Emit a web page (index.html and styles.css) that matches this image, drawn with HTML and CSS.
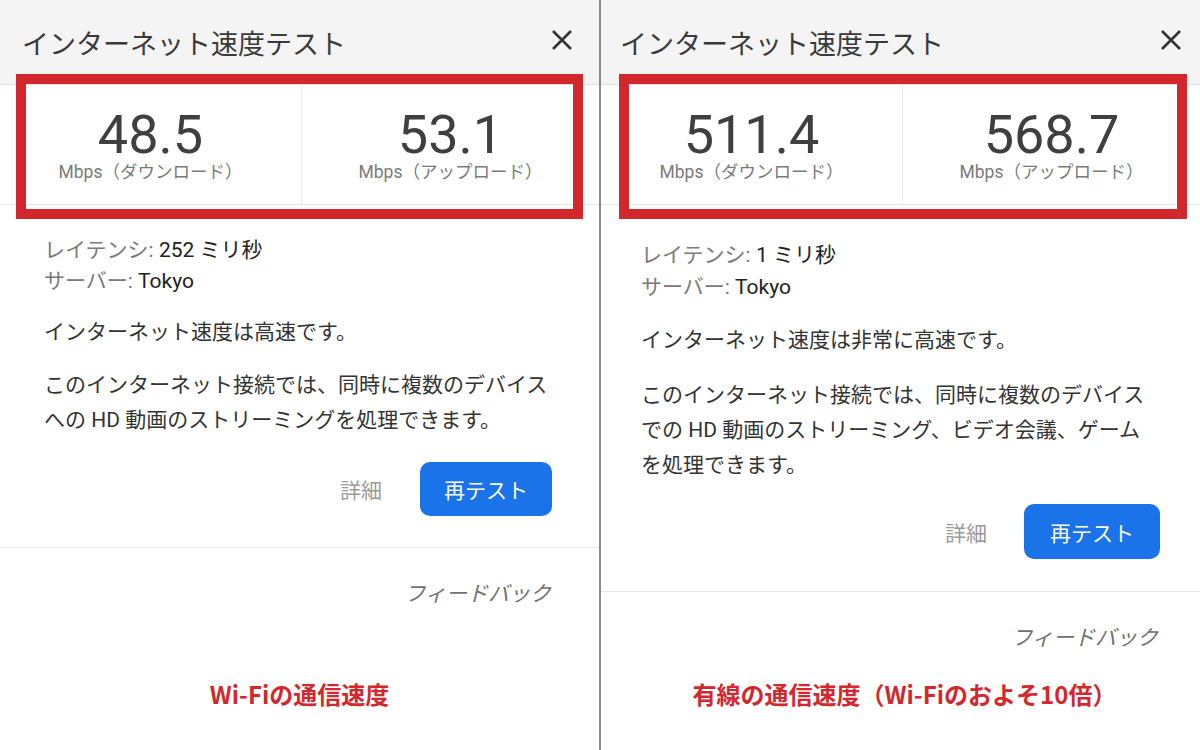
FILE: index.html
```html
<!DOCTYPE html>
<html lang="ja">
<head>
    <meta charset="UTF-8">
    <meta name="viewport" content="width=device-width, initial-scale=1.0">
    <title>インターネット速度テスト - Wi-Fiと有線の比較</title>
    <link rel="stylesheet" href="styles.css">
</head>
<body>

<div class="compare">
    <!-- Wi-Fi -->
    <div class="shot">
        <div class="dialog">
            <div class="dialog-header">
                <h1>インターネット速度テスト</h1>
                <span class="close">
                    <svg width="24" height="24" viewBox="0 0 24 24"><path d="M3 3 L21 21 M21 3 L3 21" stroke="#333" stroke-width="2.6" fill="none"/></svg>
                </span>
            </div>
            <div class="stats">
                <div class="stat">
                    <div class="stat-value">48.5</div>
                    <div class="stat-unit">Mbps（ダウンロード）</div>
                </div>
                <div class="stat">
                    <div class="stat-value">53.1</div>
                    <div class="stat-unit">Mbps（アップロード）</div>
                </div>
            </div>
            <div class="highlight"></div>
            <div class="dialog-body">
                <div class="meta"><span class="meta-label">レイテンシ:</span> 252 ミリ秒</div>
                <div class="meta"><span class="meta-label">サーバー:</span> Tokyo</div>
                <p class="summary">インターネット速度は高速です。</p>
                <p class="detail">このインターネット接続では、同時に複数のデバイスへの HD 動画のストリーミングを処理できます。</p>
            </div>
            <div class="actions">
                <button class="link-btn">詳細</button>
                <button class="primary-btn">再テスト</button>
            </div>
            <div class="feedback">フィードバック</div>
        </div>
        <p class="caption">Wi-Fiの通信速度</p>
    </div>

    <!-- 有線 -->
    <div class="shot">
        <div class="dialog dialog-wired">
            <div class="dialog-header">
                <h1>インターネット速度テスト</h1>
                <span class="close">
                    <svg width="24" height="24" viewBox="0 0 24 24"><path d="M3 3 L21 21 M21 3 L3 21" stroke="#333" stroke-width="2.6" fill="none"/></svg>
                </span>
            </div>
            <div class="stats">
                <div class="stat">
                    <div class="stat-value">511.4</div>
                    <div class="stat-unit">Mbps（ダウンロード）</div>
                </div>
                <div class="stat">
                    <div class="stat-value">568.7</div>
                    <div class="stat-unit">Mbps（アップロード）</div>
                </div>
            </div>
            <div class="highlight"></div>
            <div class="dialog-body">
                <div class="meta"><span class="meta-label">レイテンシ:</span> 1 ミリ秒</div>
                <div class="meta"><span class="meta-label">サーバー:</span> Tokyo</div>
                <p class="summary">インターネット速度は非常に高速です。</p>
                <p class="detail">このインターネット接続では、同時に複数のデバイスでの HD 動画のストリーミング、ビデオ会議、ゲームを処理できます。</p>
            </div>
            <div class="actions">
                <button class="link-btn">詳細</button>
                <button class="primary-btn">再テスト</button>
            </div>
            <div class="feedback">フィードバック</div>
        </div>
        <p class="caption">有線の通信速度（Wi-Fiのおよそ10倍）</p>
    </div>
</div>

</body>
</html>
```

FILE: styles.css
```css
body {
    margin: 0;
    background: white;
    font-family: Roboto, "Noto Sans CJK JP", sans-serif;
    color: #3c3c3c;
}
.compare {
    display: flex;
    height: 750px;
    overflow: hidden;
}
.shot {
    width: 599px;
    display: flex;
    flex-direction: column;
}
.shot + .shot {
    flex: 1;
    border-left: 2px solid #8a8a8a;
}

/* dialog */
.dialog {
    position: relative;
}
.dialog-header {
    height: 85px;
    box-sizing: border-box;
    display: flex;
    align-items: center;
    justify-content: space-between;
    padding: 6px 25px 0 22px;
    background: #f4f4f4;
    border-bottom: 1px solid #e2e2e2;
}
.dialog-header h1 {
    margin: 0;
    font-size: 27px;
    font-weight: normal;
    line-height: 1.2;
    color: #3a3a3a;
}
.close {
    display: flex;
    margin-top: -10px;
}
.stats {
    display: flex;
    height: 120px;
    box-sizing: border-box;
    border-bottom: 1px solid #e6e6e6;
}
.stat {
    flex: 1;
    text-align: center;
    padding-top: 22px;
}
.stat:first-child {
    flex: none;
    width: 302px;
    box-sizing: border-box;
    border-right: 1px solid #ebebeb;
}
.stat-value {
    font-size: 54px;
    line-height: 56px;
    color: #3f3f3f;
}
.stat-unit {
    font-size: 17.5px;
    line-height: 18px;
    color: #7a7a7a;
}
.highlight {
    position: absolute;
    left: 16px;
    top: 74px;
    width: 567px;
    height: 145px;
    box-sizing: border-box;
    border: 10px solid #d2282d;
}
.dialog-body {
    padding: 30px 43px 0 44px;
}
.meta {
    font-size: 21px;
    line-height: 31px;
    color: #222;
}
.meta-label {
    color: #7a7a7a;
}
.summary, .detail {
    margin: 18px 0 0;
    font-size: 21px;
    line-height: 35px;
    color: #333;
}
.actions {
    display: flex;
    justify-content: flex-end;
    align-items: center;
    gap: 38px;
    padding: 24px 47px 31px 0;
    border-bottom: 1px solid #e6e6e6;
}
.link-btn {
    border: none;
    background: none;
    padding: 0;
    font-family: inherit;
    font-size: 21px;
    color: #9a9a9a;
}
.primary-btn {
    height: 54px;
    padding: 0 24px;
    border: none;
    border-radius: 10px;
    background-color: #1a73e8;
    color: white;
    font-family: inherit;
    font-size: 21px;
}
.feedback {
    padding: 31px 48px 0 0;
    text-align: right;
    font-size: 21px;
    line-height: 30px;
    font-style: italic;
    color: #707070;
}

/* right-hand screenshot is a touch wider */
.dialog-wired .dialog-header {
    padding-left: 19px;
    padding-right: 17px;
}
.dialog-wired .highlight {
    left: 18px;
    width: 568px;
}
.dialog-wired .dialog-body {
    padding: 34px 47px 0 40px;
}
.dialog-wired .meta {
    line-height: 32px;
}
.dialog-wired .summary {
    margin-top: 20px;
}
.dialog-wired .detail {
    margin-top: 20px;
}
.dialog-wired .actions {
    gap: 37px;
    padding: 21px 40px 32px 0;
}
.dialog-wired .primary-btn {
    height: 55px;
    padding: 0 26px;
}
.dialog-wired .feedback {
    padding-right: 42px;
}

.caption {
    margin: auto 0 36px;
    text-align: center;
    font-family: "Noto Sans CJK JP", sans-serif;
    font-size: 24px;
    font-weight: bold;
    line-height: 40px;
    color: #d3282e;
}
.shot + .shot .caption {
    padding-left: 8px;
}
```
